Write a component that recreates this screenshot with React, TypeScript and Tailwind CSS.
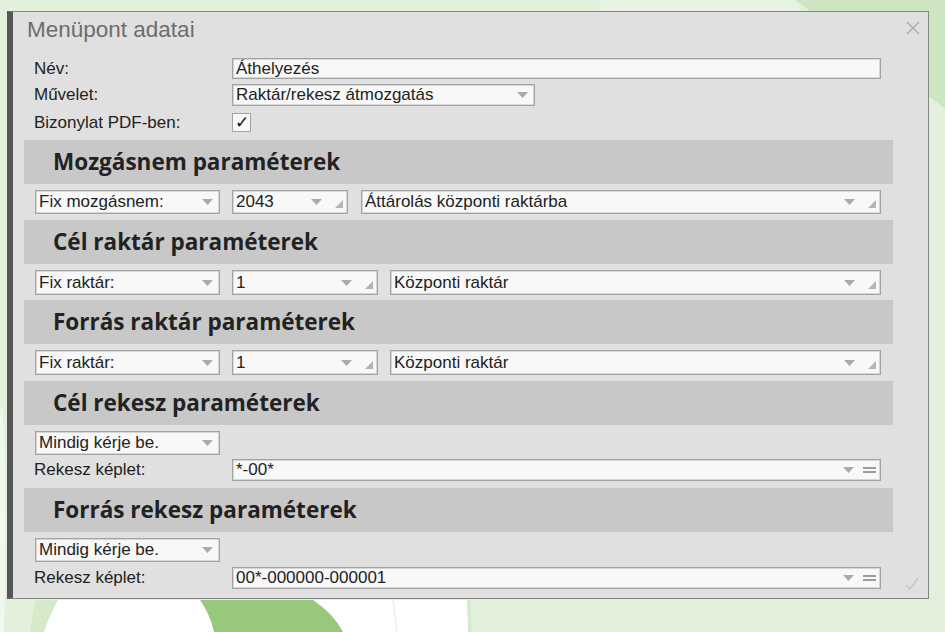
import React from "react";

type Kind = "none" | "plain" | "combo" | "formula";

function Arrow() {
    return (
        <svg width="11" height="6" viewBox="0 0 11 6" className="shrink-0">
            <polygon points="0,0 11,0 5.5,6" fill="#aaaaaa" />
        </svg>
    );
}

function Field({ text, kind, className }: { text: string; kind: Kind; className: string }) {
    return (
        <div className={"relative flex items-center bg-[#f8f8f8] border border-[#a3a3a3] shadow-[inset_0_0_0_1px_#d6d6d6] pl-[3px] text-[17px] text-[#222] " + className}>
            <span className="grow whitespace-nowrap leading-[20px]">{text}</span>
            {kind === "plain" && (
                <div className="flex items-center pr-[6px]">
                    <Arrow />
                </div>
            )}
            {kind === "combo" && (
                <div className="flex items-center gap-[13px] pr-[4px] self-stretch">
                    <Arrow />
                    <svg width="8" height="8" viewBox="0 0 8 8" className="self-end mb-[5px]">
                        <polygon points="8,0 8,8 0,8" fill="#b4b4b4" />
                    </svg>
                </div>
            )}
            {kind === "formula" && (
                <div className="flex items-center gap-[9px] pr-[4px]">
                    <Arrow />
                    <div className="flex flex-col gap-[2px]">
                        <div className="w-[13px] h-[2px] bg-[#9c9c9c]" />
                        <div className="w-[13px] h-[2px] bg-[#9c9c9c]" />
                    </div>
                </div>
            )}
        </div>
    );
}

function Header({ title }: { title: string }) {
    return (
        <div className="ml-[11px] w-[869px] h-[44px] bg-[#c8c8c8] flex items-center pl-[29px] font-['Open_Sans',sans-serif] font-bold text-[22.5px] leading-none text-[#222]">
            {title}
        </div>
    );
}

function Background() {
    return (
        <svg className="absolute inset-0" width="945" height="632" viewBox="0 0 945 632">
            <rect width="945" height="632" fill="#e3f0dc" />
            <rect x="600" width="200" height="12" fill="#e7f2e2" />
            <polygon points="795,0 945,0 945,108" fill="#cde5c0" />
            <path d="M 2 400 Q 8 500 4 632 L 0 632 L 0 420 Z" fill="#f2f8ee" />
            <path d="M 36 600 L 470 600 L 472 632 L 30 632 Q 32 614 36 600 Z" fill="#d6eacb" />
            <path d="M 58 600 L 467 600 L 468 632 L 44 632 Q 50 614 58 600 Z" fill="#ffffff" />
            <path d="M 200 600 L 313 600 Q 334 614 343 632 L 214 632 Q 210 614 200 600 Z" fill="#97c87c" />
            <path d="M 392 600 L 396 632 L 398 632 L 394 600 Z" fill="#eef6ea" />
        </svg>
    );
}

export default function App() {
    return (
        <div className="relative w-[945px] h-[632px] overflow-hidden font-['Liberation_Sans',Arial,sans-serif]">
            <Background />
            <div className="relative ml-[7px] mt-[11px] w-[922px] h-[588px] bg-[#e0e0e0] border border-[#858585] border-l-[6px] border-l-[#555] flex flex-col">
                <div className="h-[46px] pt-[6px] pl-[14px] text-[22.5px] leading-[24px] text-[#6d6d6d] shrink-0">
                    Menüpont adatai
                </div>
                <svg className="absolute right-[8px] top-[9px]" width="14" height="14" viewBox="0 0 14 14">
                    <path d="M1 1 L13 13 M13 1 L1 13" stroke="#b0b0b0" strokeWidth="1.6" />
                </svg>

                <div className="flex items-center h-[21px] pl-[21px] text-[17px] text-[#222]">
                    <span className="w-[198px] shrink-0">Név:</span>
                    <Field text="Áthelyezés" kind="none" className="w-[649px] h-[21px]" />
                </div>
                <div className="flex items-center h-[22px] mt-[5px] pl-[21px] text-[17px] text-[#222]">
                    <span className="w-[198px] shrink-0">Művelet:</span>
                    <Field text="Raktár/rekesz átmozgatás" kind="plain" className="w-[303px] h-[22px]" />
                </div>
                <div className="flex items-center h-[19px] mt-[7px] pl-[21px] text-[17px] text-[#222]">
                    <span className="w-[198px] shrink-0">Bizonylat PDF-ben:</span>
                    <div className="w-[19px] h-[19px] bg-[#f8f8f8] border border-[#a3a3a3] flex items-center justify-center text-[17px] leading-none text-[#111]">
                        ✓
                    </div>
                </div>

                <div className="mt-[8px]">
                    <Header title="Mozgásnem paraméterek" />
                </div>
                <div className="flex items-center gap-[12px] h-[24px] mt-[6px] pl-[22px]">
                    <Field text="Fix mozgásnem:" kind="plain" className="w-[185px] h-[24px]" />
                    <Field text="2043" kind="combo" className="w-[116px] h-[24px]" />
                    <Field text="Áttárolás központi raktárba" kind="combo" className="w-[520px] h-[24px] ml-[1px]" />
                </div>

                <div className="mt-[6px]">
                    <Header title="Cél raktár paraméterek" />
                </div>
                <div className="flex items-center gap-[12px] h-[25px] mt-[6px] pl-[22px]">
                    <Field text="Fix raktár:" kind="plain" className="w-[185px] h-[25px]" />
                    <Field text="1" kind="combo" className="w-[146px] h-[25px]" />
                    <Field text="Központi raktár" kind="combo" className="w-[491px] h-[25px]" />
                </div>

                <div className="mt-[5px]">
                    <Header title="Forrás raktár paraméterek" />
                </div>
                <div className="flex items-center gap-[12px] h-[25px] mt-[6px] pl-[22px]">
                    <Field text="Fix raktár:" kind="plain" className="w-[185px] h-[25px]" />
                    <Field text="1" kind="combo" className="w-[146px] h-[25px]" />
                    <Field text="Központi raktár" kind="combo" className="w-[491px] h-[25px]" />
                </div>

                <div className="mt-[6px]">
                    <Header title="Cél rekesz paraméterek" />
                </div>
                <div className="h-[24px] mt-[6px] pl-[22px]">
                    <Field text="Mindig kérje be." kind="plain" className="w-[185px] h-[24px]" />
                </div>
                <div className="flex items-center h-[22px] mt-[4px] pl-[21px] text-[17px] text-[#222]">
                    <span className="w-[198px] shrink-0">Rekesz képlet:</span>
                    <Field text="*-00*" kind="formula" className="w-[649px] h-[22px]" />
                </div>

                <div className="mt-[7px]">
                    <Header title="Forrás rekesz paraméterek" />
                </div>
                <div className="h-[24px] mt-[6px] pl-[22px]">
                    <Field text="Mindig kérje be." kind="plain" className="w-[185px] h-[24px]" />
                </div>
                <div className="flex items-center h-[22px] mt-[5px] pl-[21px] text-[17px] text-[#222]">
                    <span className="w-[198px] shrink-0">Rekesz képlet:</span>
                    <Field text="00*-000000-000001" kind="formula" className="w-[649px] h-[22px]" />
                </div>

                <svg className="absolute right-[9px] bottom-[8px]" width="14" height="13" viewBox="0 0 14 13">
                    <path d="M1 8 L5 12 L13 1" stroke="#c4c4c4" strokeWidth="1.4" fill="none" />
                </svg>
            </div>
        </div>
    );
}
